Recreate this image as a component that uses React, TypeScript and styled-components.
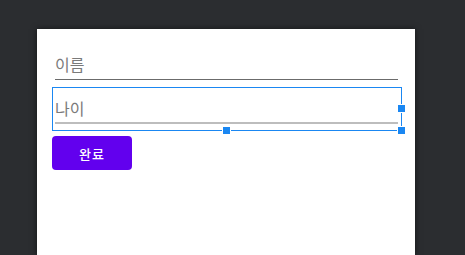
import React from "react";
import styled, { createGlobalStyle } from "styled-components";

const GlobalStyle = createGlobalStyle`
  html, body {
    margin: 0;
    padding: 0;
    height: 100%;
    overflow: hidden;
    background: #2b2d30;
  }
  body {
    font-family: "Noto Sans CJK KR", "Noto Sans", sans-serif;
  }
`;

const Canvas = styled.div`
  height: 100vh;
  box-sizing: border-box;
  padding: 29px 0 0 37px;
  display: flex;
`;

const Screen = styled.div`
  width: 378px;
  background: #ffffff;
  box-shadow: 0 0 6px rgba(0, 0, 0, 0.55);
  box-sizing: border-box;
  padding: 15px 13px 0 15px;
  display: flex;
  flex-direction: column;
  align-items: stretch;
`;

const Field = styled.div<{ $selected?: boolean }>`
  position: relative;
  border: ${(p) => (p.$selected ? "1px solid #1a87f2" : "none")};
  padding: ${(p) => (p.$selected ? "0 3px 6px 2px" : "1px 4px 7px 3px")};
`;

const Input = styled.div<{ $focused?: boolean }>`
  height: ${(p) => (p.$focused ? "36px" : "35px")};
  box-sizing: border-box;
  padding-top: ${(p) => (p.$focused ? "10px" : "9px")};
  font-size: 16px;
  line-height: 20px;
  color: #7a7a7a;
  border-bottom: ${(p) => (p.$focused ? "2px solid #bdbdbd" : "1px solid #6b6b6b")};
`;

const Handle = styled.span<{ $x: "mid" | "end"; $y: "mid" | "end" }>`
  position: absolute;
  width: 7px;
  height: 7px;
  background: #1a87f2;
  box-shadow: 0 0 0 1px #ffffff;
  left: ${(p) => (p.$x === "end" ? "calc(100% - 3px)" : "calc(50% - 4px)")};
  top: ${(p) => (p.$y === "end" ? "calc(100% - 3px)" : "calc(50% - 4px)")};
`;

const Button = styled.button`
  align-self: flex-start;
  margin-top: 5px;
  width: 80px;
  height: 34px;
  border: none;
  border-radius: 4px;
  background: #6200ee;
  color: #ffffff;
  font-family: "Noto Sans CJK KR", "Noto Sans", sans-serif;
  font-size: 13px;
  font-weight: 500;
  letter-spacing: 1px;
  padding: 0;
`;

const App = () => {
  return (
    <>
      <GlobalStyle />
      <Canvas>
        <Screen>
          <Field>
            <Input>이름</Input>
          </Field>
          <Field $selected>
            <Input $focused>나이</Input>
            <Handle $x="end" $y="mid" />
            <Handle $x="mid" $y="end" />
            <Handle $x="end" $y="end" />
          </Field>
          <Button>완료</Button>
        </Screen>
      </Canvas>
    </>
  );
};

export default App;
